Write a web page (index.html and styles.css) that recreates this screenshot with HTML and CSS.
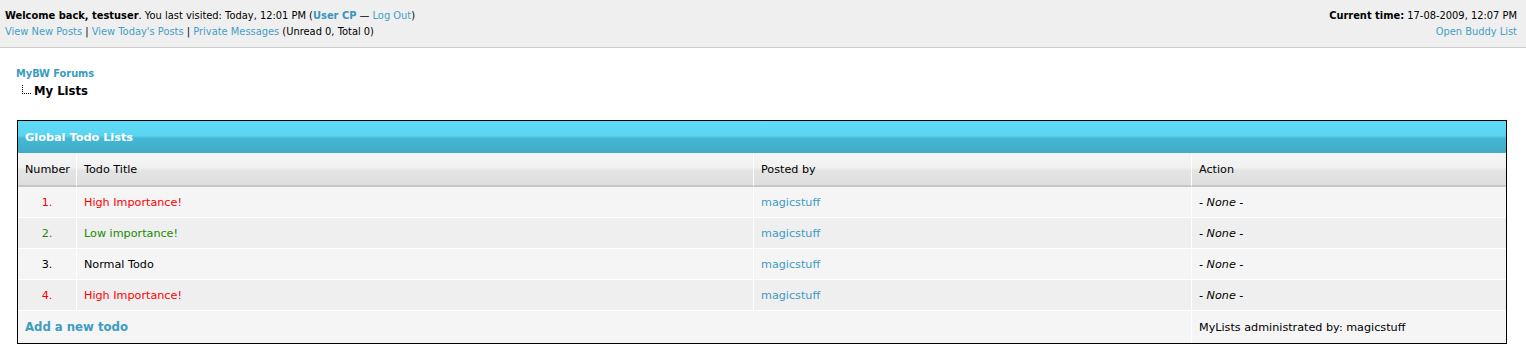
FILE: index.html
```html
<!DOCTYPE html>
<html lang="en">
<head>
    <meta charset="UTF-8">
    <title>My Lists</title>
    <link rel="stylesheet" href="styles.css">
</head>
<body>

<!-- Welcome Panel -->
<div class="panel">
    <div class="panel-left">
        <div><strong>Welcome back, testuser</strong>. You last visited: Today, 12:01 PM (<a href="#" class="bold">User CP</a> &mdash; <a href="#">Log Out</a>)</div>
        <div><a href="#">View New Posts</a> | <a href="#">View Today's Posts</a> | <a href="#">Private Messages</a> (Unread 0, Total 0)</div>
    </div>
    <div class="panel-right">
        <div><strong>Current time:</strong> 17-08-2009, 12:07 PM</div>
        <div><a href="#">Open Buddy List</a></div>
    </div>
</div>

<div class="container">
    <!-- Breadcrumb -->
    <div class="navigation">
        <a href="#" class="nav-root">MyBW Forums</a>
        <div class="nav-active"><span class="nav-line"></span>My Lists</div>
    </div>

    <!-- Todo Table -->
    <table class="tborder">
        <colgroup>
            <col class="col-num">
            <col class="col-title">
            <col class="col-poster">
            <col class="col-action">
        </colgroup>
        <tr>
            <td class="thead" colspan="4">Global Todo Lists</td>
        </tr>
        <tr class="tcat">
            <td>Number</td>
            <td>Todo Title</td>
            <td>Posted by</td>
            <td>Action</td>
        </tr>
        <tr class="trow1">
            <td class="num high">1.</td>
            <td class="high">High Importance!</td>
            <td><a href="#">magicstuff</a></td>
            <td><em>- None -</em></td>
        </tr>
        <tr class="trow2">
            <td class="num low">2.</td>
            <td class="low">Low importance!</td>
            <td><a href="#">magicstuff</a></td>
            <td><em>- None -</em></td>
        </tr>
        <tr class="trow1">
            <td class="num">3.</td>
            <td>Normal Todo</td>
            <td><a href="#">magicstuff</a></td>
            <td><em>- None -</em></td>
        </tr>
        <tr class="trow2">
            <td class="num high">4.</td>
            <td class="high">High Importance!</td>
            <td><a href="#">magicstuff</a></td>
            <td><em>- None -</em></td>
        </tr>
        <tr class="trow1 tfoot">
            <td colspan="3"><a href="#" class="bold">Add a new todo</a></td>
            <td>MyLists administrated by: magicstuff</td>
        </tr>
    </table>
</div>

</body>
</html>
```

FILE: styles.css
```css
/* Global Styles */
body {
    font-family: 'DejaVu Sans', Verdana, sans-serif;
    margin: 0;
    padding: 0;
    background-color: #fff;
    color: #000;
}

a {
    color: #3d9cc0;
    text-decoration: none;
}

.bold {
    font-weight: bold;
}

/* Welcome Panel */
.panel {
    display: flex;
    justify-content: space-between;
    background-color: #efefef;
    border-bottom: 1px solid #cccccc;
    padding: 8px 9px 7px 5px;
    font-size: 9.9px;
    line-height: 16px;
}

.panel a {
    color: #43a0c6;
}

.panel a.bold {
    color: #3a96bb;
}

.panel-right {
    text-align: right;
}

/* Breadcrumb */
.container {
    padding: 0 20px 0 17px;
}

.navigation {
    padding-top: 19px;
    margin-left: -1px;
    font-weight: bold;
}

.nav-root {
    display: block;
    font-size: 9.8px;
    line-height: 14px;
    color: #3a9bc0;
}

.nav-active {
    display: flex;
    align-items: flex-end;
    font-size: 11.6px;
    line-height: 19px;
    margin-top: 1px;
}

.nav-line {
    display: inline-block;
    width: 8px;
    height: 8px;
    margin: 0 3px 7px 6px;
    border-left: 1px dotted #000;
    border-bottom: 1px dotted #000;
}

/* Todo Table */
.tborder {
    width: 100%;
    margin-top: 19px;
    border: 1px solid #000;
    border-collapse: separate;
    border-spacing: 0;
    table-layout: fixed;
    font-size: 11.2px;
}

.col-num {
    width: 59px;
}

.col-title {
    width: 677px;
}

.col-poster {
    width: 438px;
}

.col-action {
    width: 314px;
}

.tborder td {
    padding: 0 7px;
    height: 30px;
    border-right: 1px solid #fff;
    border-bottom: 1px solid #fff;
    white-space: nowrap;
}

.tborder td:last-child {
    border-right: none;
}

.tborder td.thead {
    background: linear-gradient(to bottom, #5fdcf9 0%, #5ad4f1 45%, #45b7d4 55%, #3fadc9 100%);
    color: #fff;
    font-weight: bold;
    font-size: 11.3px;
    height: 32px;
    border-bottom: none;
}

.tborder .tcat td {
    background: linear-gradient(to bottom, #f6f6f6 0%, #f1f1f1 45%, #e4e4e4 55%, #dedede 100%);
    height: 31px;
    padding-top: 1px;
    border-bottom: 2px solid #c6c6c6;
}

.trow1 td {
    background-color: #f5f5f5;
}

.trow2 td {
    background-color: #efefef;
}

.tborder .tfoot td {
    height: 32px;
    border-bottom: none;
}

.tfoot a {
    font-size: 11.7px;
}

.tborder td.num {
    text-align: center;
}

.high {
    color: #ff0000;
}

.low {
    color: #218a00;
}
```
